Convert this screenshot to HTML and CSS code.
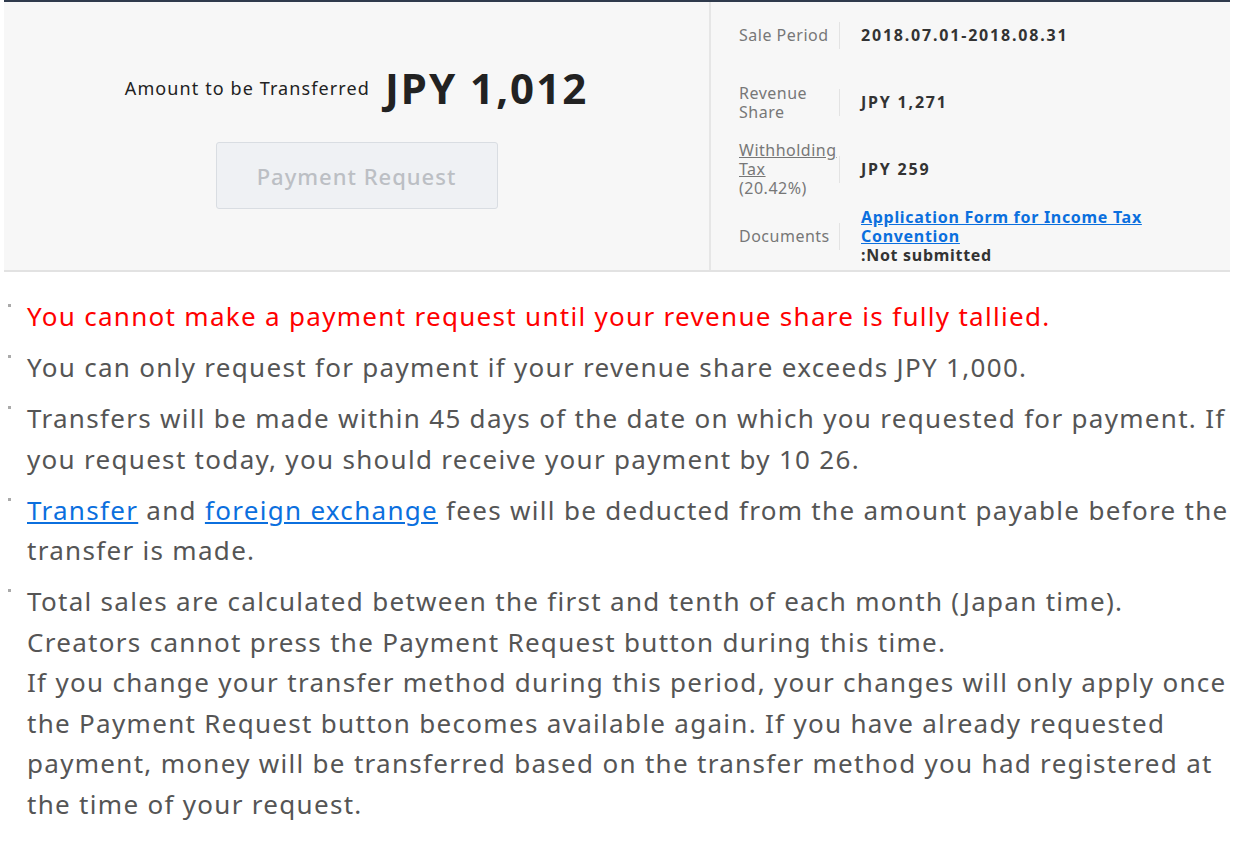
FILE: index.html
```html
<!DOCTYPE html>
<html lang="en">
<head>
  <meta charset="UTF-8">
  <title>Payment Request</title>
  <link rel="stylesheet" href="styles.css">
</head>
<body>
  <div class="summary">
    <div class="amount-section">
      <div class="amount-row">
        <span class="amount-label">Amount to be Transferred</span>
        <span class="amount-value">JPY 1,012</span>
      </div>
      <button class="request-btn" disabled>Payment Request</button>
    </div>

    <div class="details">
      <div class="detail-row">
        <div class="detail-label">Sale Period</div>
        <div class="sep"></div>
        <div class="detail-value">2018.07.01-2018.08.31</div>
      </div>
      <div class="detail-row">
        <div class="detail-label">Revenue<br>Share</div>
        <div class="sep"></div>
        <div class="detail-value">JPY 1,271</div>
      </div>
      <div class="detail-row">
        <div class="detail-label"><a href="#" class="tax-link">Withholding<br>Tax</a><br>(20.42%)</div>
        <div class="sep"></div>
        <div class="detail-value">JPY 259</div>
      </div>
      <div class="detail-row">
        <div class="detail-label">Documents</div>
        <div class="sep"></div>
        <div class="detail-value doc"><a href="#" class="doc-link">Application Form for Income Tax<br>Convention</a><br>:Not submitted</div>
      </div>
    </div>
  </div>

  <ul class="notes">
    <li class="warn">You cannot make a payment request until your revenue share is fully tallied.</li>
    <li>You can only request for payment if your revenue share exceeds JPY 1,000.</li>
    <li>Transfers will be made within 45 days of the date on which you requested for payment. If you request today, you should receive your payment by 10 26.</li>
    <li><a href="#">Transfer</a> and <a href="#">foreign exchange</a> fees will be deducted from the amount payable before the transfer is made.</li>
    <li>Total sales are calculated between the first and tenth of each month (Japan time).<br>Creators cannot press the Payment Request button during this time.<br>If you change your transfer method during this period, your changes will only apply once the Payment Request button becomes available again. If you have already requested payment, money will be transferred based on the transfer method you had registered at the time of your request.</li>
  </ul>
</body>
</html>
```

FILE: styles.css
```css
body {
  margin: 0;
  padding: 0 12px 0 4px;
  background: #fff;
  font-family: "Noto Sans", "Liberation Sans", sans-serif;
  color: #555;
}

.summary {
  display: flex;
  background: #f7f7f7;
  border-top: 2px solid #2f3a4c;
  border-bottom: 2px solid #e2e2e2;
  height: 268px;
}

.amount-section {
  width: 707px;
  border-right: 2px solid #e6e6e6;
  display: flex;
  flex-direction: column;
  align-items: center;
  padding-top: 57px;
  box-sizing: border-box;
}

.amount-row {
  display: flex;
  align-items: center;
  gap: 15px;
  color: #222;
}

.amount-label {
  font-size: 18px;
  letter-spacing: 1.1px;
}

.amount-value {
  font-size: 42px;
  font-weight: 700;
  letter-spacing: 2px;
}

.request-btn {
  margin-top: 26px;
  width: 282px;
  height: 67px;
  background: #eff1f4;
  border: 1px solid #d9dde2;
  border-radius: 3px;
  color: #bcbfc4;
  font-family: inherit;
  font-size: 22px;
  font-weight: 500;
  letter-spacing: 1px;
}

.details {
  flex: 1;
  padding-left: 28px;
  font-size: 16px;
}

.detail-row {
  display: flex;
  align-items: center;
  height: 67px;
}

.detail-label {
  width: 100px;
  color: #777;
  line-height: 19px;
  letter-spacing: 0.5px;
}

.sep {
  width: 1px;
  height: 27px;
  background: #e3e3e3;
  margin-right: 21px;
}

.detail-value {
  color: #333;
  font-weight: 700;
  line-height: 19px;
  letter-spacing: 1.8px;
}

.detail-value.doc {
  letter-spacing: 0.7px;
}

.tax-link {
  color: #777;
}

.doc-link {
  color: #0b6fde;
}

.notes {
  list-style: none;
  margin: 24px 0 0;
  padding: 0;
  font-size: 26px;
  line-height: 40.5px;
  letter-spacing: 1.3px;
}

.notes li {
  position: relative;
  padding-left: 23px;
  margin-bottom: 10.5px;
}

.notes li::before {
  content: "";
  position: absolute;
  left: 4px;
  top: 8px;
  width: 3px;
  height: 3px;
  background: #aaa;
}

.notes .warn {
  color: #f00;
}

.notes a {
  color: #0b6fde;
}
```
